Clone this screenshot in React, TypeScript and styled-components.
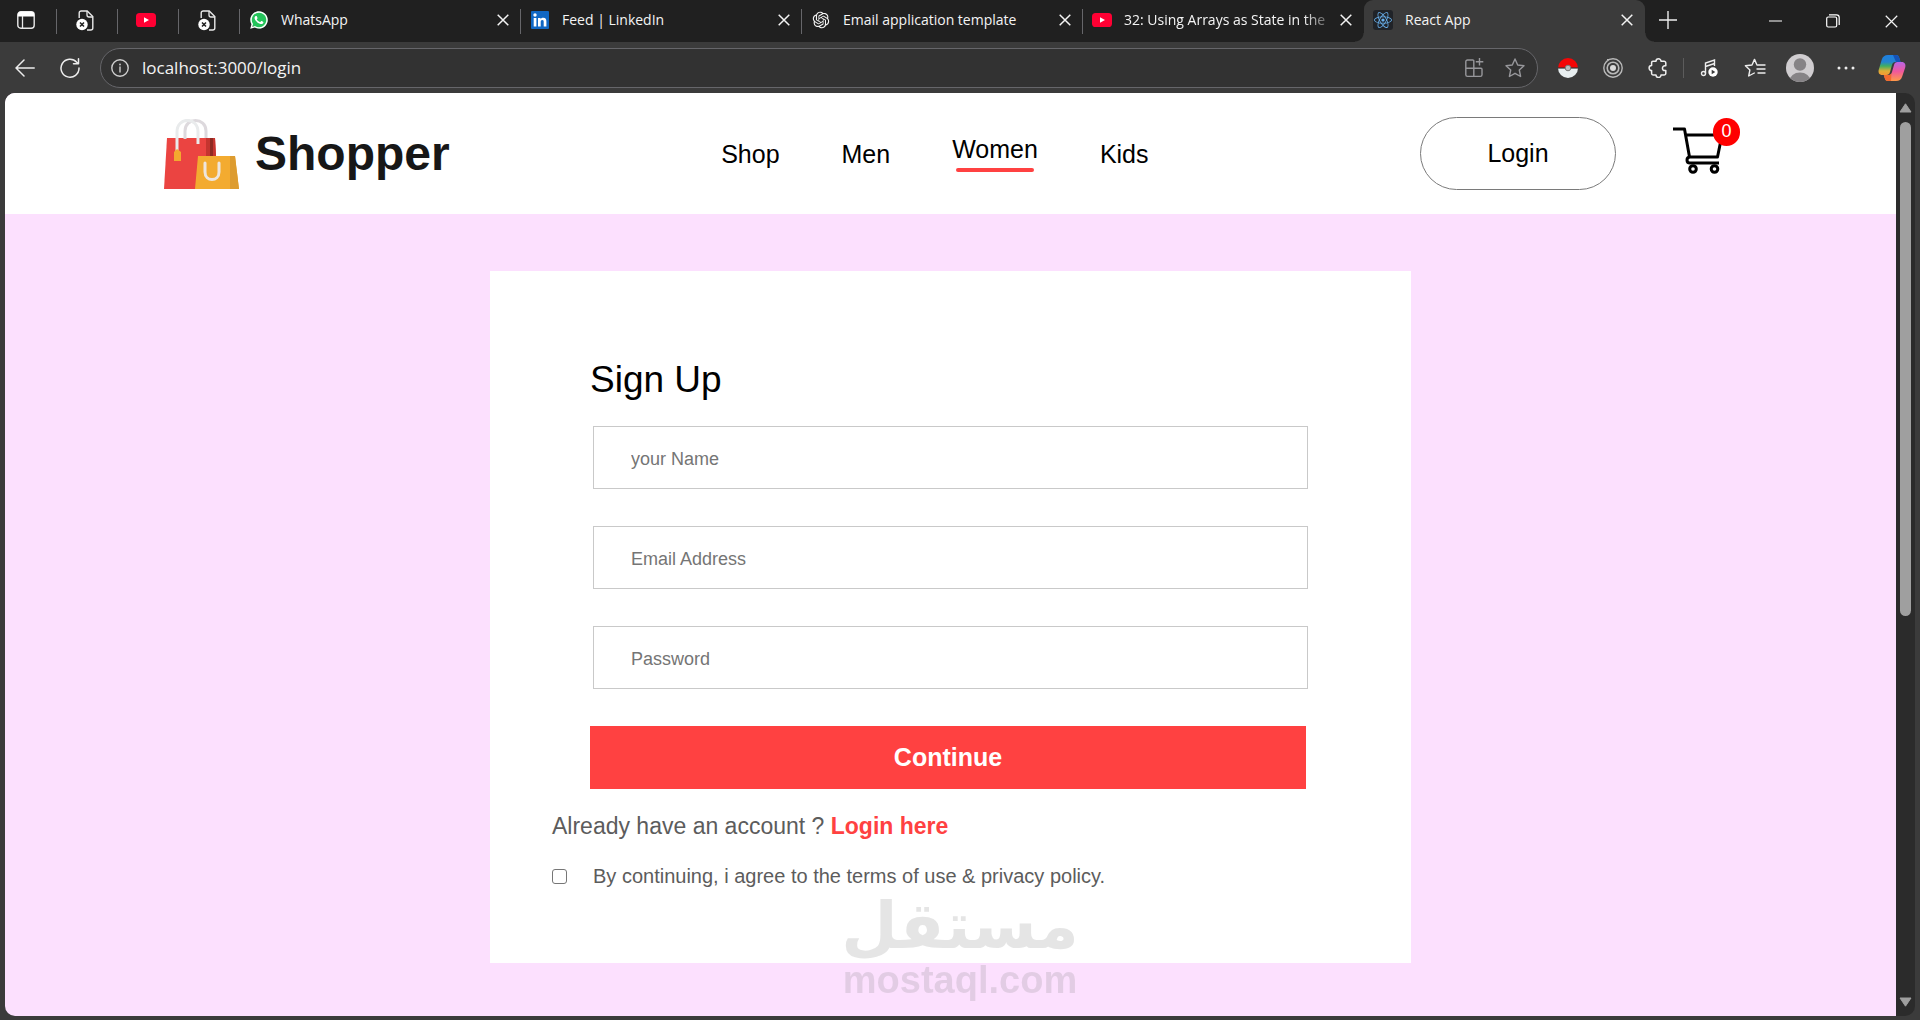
import React from "react";
import styled, { createGlobalStyle, css } from "styled-components";
import { FaReact, FaWhatsapp } from "react-icons/fa";
import { RiOpenaiFill } from "react-icons/ri";

const uiFont = `"Open Sans", "Noto Sans", sans-serif`;
const siteFont = `"Liberation Sans", Arial, sans-serif`;

const colors = {
  strip: "#202020",
  chrome: "#3b3b3b",
  field: "#323232",
  line: "#66666a",
  text: "#f4f4f4",
  accent: "#ff4141",
  pink: "#fce0fe",
  muted: "#5c5c5c",
};

const GlobalStyle = createGlobalStyle`
  * { box-sizing: border-box; }
  body { margin: 0; background: ${colors.chrome}; }
  button, input { font: inherit; }
`;

const Window = styled.div`
  position: relative;
  display: flex;
  flex-direction: column;
  height: 100vh;
  overflow: hidden;
  background: ${colors.chrome};
  font-family: ${uiFont};
  color: ${colors.text};
`;

/* ---------- browser chrome ---------- */

const IconButton = styled.button<{ $w?: number }>`
  display: flex;
  align-items: center;
  justify-content: center;
  flex: none;
  width: ${(p) => p.$w ?? 20}px;
  padding: 0;
  border: 0;
  background: none;
  color: inherit;
  svg { display: block; flex: none; }
`;

const TabStrip = styled.div`
  display: flex;
  height: 42px;
  background: ${colors.strip};
`;

const separator = css`
  background-image: linear-gradient(${colors.line}, ${colors.line});
  background-size: 1px 25px;
  background-position: right 9px;
  background-repeat: no-repeat;
`;

const PinnedTab = styled.button<{ $w?: number }>`
  display: flex;
  align-items: center;
  justify-content: center;
  flex: none;
  width: ${(p) => p.$w ?? 61}px;
  padding: 0 5px 2px 0;
  border: 0;
  background-color: transparent;
  ${separator}
`;

const Tab = styled.div<{ $active?: boolean; $line?: boolean }>`
  position: relative;
  display: flex;
  align-items: center;
  flex: 0 1 281px;
  min-width: 0;
  padding: 0 12px 2px 9px;
  ${(p) => p.$line && separator}
  ${(p) =>
    p.$active &&
    css`
      background: ${colors.chrome};
      border-radius: 9px 9px 0 0;
      &::before,
      &::after {
        content: "";
        position: absolute;
        bottom: 0;
        width: 9px;
        height: 9px;
      }
      &::before {
        right: 100%;
        background: radial-gradient(circle at 0 0, transparent 8px, ${colors.chrome} 9px);
      }
      &::after {
        left: 100%;
        background: radial-gradient(circle at 100% 0, transparent 8px, ${colors.chrome} 9px);
      }
    `}
`;

const TabTitle = styled.span<{ $fade?: boolean }>`
  flex: 1;
  min-width: 0;
  margin: 0 12px;
  overflow: hidden;
  white-space: nowrap;
  font-size: 14px;
  line-height: 20px;
  ${(p) => p.$fade && css`mask-image: linear-gradient(90deg, #000 88%, transparent 104%);`}
`;

const FavIcon = styled.span`
  display: flex;
  align-items: center;
  justify-content: center;
  flex: none;
  width: 20px;
  height: 20px;
`;

const GreenDisc = styled(FavIcon)`
  border-radius: 50%;
  background: radial-gradient(circle, #25c45b 8px, transparent 9px);
  color: #fff;
`;

const ReactTile = styled(FavIcon)`
  border-radius: 3px;
  background: #202328;
  color: #69b1ee;
`;

const WindowControls = styled.div`
  display: flex;
  margin-left: auto;
`;

const Toolbar = styled.div`
  display: flex;
  align-items: center;
  height: 51px;
  padding: 0 14px 0 15px;
`;

const NavButtons = styled.div`
  display: flex;
  gap: 25px;
  margin-right: 20px;
`;

const AddressBar = styled.div`
  display: flex;
  align-items: center;
  flex: 1;
  height: 40px;
  padding: 0 12px 0 10px;
  border: 1px solid ${colors.line};
  border-radius: 20px;
  background: ${colors.field};
`;

const AddressInput = styled.input`
  flex: 1;
  min-width: 0;
  margin: 0 13px;
  padding: 0;
  border: 0;
  outline: 0;
  background: none;
  color: ${colors.text};
  font-size: 17px;
  line-height: 24px;
`;

const AddressActions = styled.div`
  display: flex;
  gap: 21px;
  color: #97979b;
`;

const Extensions = styled.div`
  display: flex;
  align-items: center;
  gap: 25px;
  margin-left: 20px;
`;

const Rule = styled.span`
  width: 1px;
  height: 20px;
  margin: 0 -9px 0 -10px;
  background: #5c5c5c;
`;

const Profile = styled.div`
  display: flex;
  align-items: center;
  gap: 18px;
  margin-left: -4px;
`;

/* ---------- page frame ---------- */

const Frame = styled.div`
  display: flex;
  flex: 1;
  min-height: 0;
  margin: 0 5px 4px;
  border-radius: 10px;
  overflow: hidden;
`;

const Page = styled.div`
  flex: 1;
  min-width: 0;
  overflow: hidden;
  background: ${colors.pink};
  font-family: ${siteFont};
  color: #000;
`;

const ScrollBar = styled.div`
  display: flex;
  flex-direction: column;
  align-items: center;
  flex: none;
  width: 19px;
  padding: 10px 0 9px;
  background: #2b2b2b;
`;

const ScrollTrack = styled.div`
  flex: 1;
  width: 11px;
  margin: 9px 0;
`;

const ScrollThumb = styled.div`
  height: 57%;
  border-radius: 6px;
  background: #9f9f9f;
`;

/* ---------- shop page ---------- */

const Header = styled.header`
  display: flex;
  align-items: center;
  justify-content: space-between;
  height: 121px;
  padding: 0 156px 0 159px;
  background: #fff;
`;

const Brand = styled.a`
  display: flex;
  align-items: center;
  gap: 16px;
  color: #171717;
  text-decoration: none;
  font-size: 48px;
  font-weight: 700;
  line-height: 56px;
`;

const Menu = styled.nav`
  display: flex;
  align-items: center;
  gap: 62px;
`;

const MenuLink = styled.a<{ $current?: boolean }>`
  display: flex;
  flex-direction: column;
  align-items: center;
  gap: 5px;
  color: #000;
  text-decoration: none;
  font-size: 25px;
  line-height: 28px;
  ${(p) =>
    p.$current &&
    css`
      &::after {
        content: "";
        width: 90%;
        height: 4px;
        border-radius: 10px;
        background: ${colors.accent};
      }
    `}
`;

const Actions = styled.div`
  display: flex;
  align-items: center;
  gap: 57px;
`;

const LoginButton = styled.button`
  width: 196px;
  height: 73px;
  border: 1px solid #7a7a7a;
  border-radius: 37px;
  background: #fff;
  color: #000;
  font-size: 25px;
`;

const Cart = styled.a`
  position: relative;
  display: block;
  width: 67px;
  height: 54px;
  color: #000;
  svg { display: block; }
`;

const CartCount = styled.span`
  position: absolute;
  top: -9px;
  right: 0;
  width: 27px;
  height: 28px;
  border-radius: 14px;
  background: #ff0000;
  color: #fff;
  font-size: 18px;
  line-height: 27px;
  text-align: center;
`;

const Main = styled.main`
  padding: 57px 20px;
`;

const Card = styled.form`
  max-width: 921px;
  margin: 0 auto;
  padding: 88px 62px 75px;
  background: #fff;
`;

const Title = styled.h1`
  margin: 0 43px 25px 38px;
  font-size: 37px;
  font-weight: 400;
  line-height: 42px;
`;

const Fields = styled.div`
  display: flex;
  flex-direction: column;
  gap: 37px;
  margin: 0 41px 37px;
`;

const Field = styled.input`
  width: 100%;
  height: 63px;
  padding: 3px 37px 0;
  border: 1px solid #c9c9c9;
  border-radius: 0;
  outline: 0;
  background: #fff;
  color: ${colors.muted};
  font-size: 18px;
  &::placeholder { color: #757575; opacity: 1; }
`;

const SubmitRow = styled.div`
  display: flex;
  margin: 0 43px 24px 38px;
`;

const Submit = styled.button`
  flex: 1;
  height: 63px;
  border: 0;
  background: ${colors.accent};
  color: #fff;
  font-size: 25px;
  font-weight: 700;
`;

const Prompt = styled.p`
  margin: 0 0 25px;
  color: ${colors.muted};
  font-size: 23px;
  line-height: 26px;
  a {
    color: ${colors.accent};
    font-weight: 700;
    text-decoration: none;
  }
`;

const Agree = styled.div`
  display: flex;
  align-items: center;
  gap: 26px;
  color: ${colors.muted};
  font-size: 20px;
  line-height: 24px;
`;

const CheckBox = styled.input`
  appearance: none;
  flex: none;
  width: 15px;
  height: 15px;
  margin: 0;
  border: 1px solid #767676;
  border-radius: 3px;
  background: #fff;
`;

const Watermark = styled.div`
  position: absolute;
  left: 0;
  right: 0;
  bottom: 19px;
  display: flex;
  flex-direction: column;
  align-items: center;
  opacity: 0.2;
  color: #808080;
  font-weight: 700;
  pointer-events: none;
`;

const WatermarkArabic = styled.span`
  font-family: "DejaVu Sans", sans-serif;
  font-size: 65px;
  line-height: 66px;
`;

const WatermarkLatin = styled.span`
  font-family: ${siteFont};
  font-size: 38px;
  line-height: 42px;
`;

/* ---------- drawings ---------- */

const Cross = ({ size = 12, width = 1.5 }: { size?: number; width?: number }) => (
  <svg width={size} height={size} viewBox="0 0 12 12" fill="none" stroke="currentColor" strokeWidth={width}>
    <path d="M.7.7 11.3 11.3M11.3.7.7 11.3" />
  </svg>
);

const TabLayoutIcon = () => (
  <svg width="18" height="18" viewBox="0 0 18 18" fill="none">
    <rect x=".8" y=".8" width="16.4" height="16.4" rx="3" stroke="#e8e8e8" strokeWidth="1.4" />
    <path d="M.8 5.5V3.8a3 3 0 0 1 3-3h10.4a3 3 0 0 1 3 3v1.7z" fill="#fff" />
    <path d="M5.5 5v12" stroke="#e8e8e8" strokeWidth="1.3" />
  </svg>
);

const DeadFileIcon = () => (
  <svg width="18" height="21" viewBox="0 0 18 21" fill="none">
    <path d="M3.2 8V3a2 2 0 0 1 2-2h6l5.6 5.6V18a2 2 0 0 1-2 2H11" stroke="#e8e8e8" strokeWidth="1.4" />
    <path d="M11 1v4a2 2 0 0 0 2 2h4" stroke="#e8e8e8" strokeWidth="1.3" />
    <circle cx="6" cy="14.5" r="5.7" fill="#fff" />
    <path d="m4 12.5 4 4m0-4-4 4" stroke="#202020" strokeWidth="1.5" />
  </svg>
);

const YouTubeIcon = () => (
  <svg width="20" height="20" viewBox="0 0 20 20">
    <rect y="3" width="20" height="14" rx="3.6" fill="#ff0033" />
    <path d="M8 7.2v5.6l5-2.8z" fill="#fff" />
  </svg>
);

const LinkedInIcon = () => (
  <svg width="18" height="18" viewBox="0 0 18 18">
    <rect width="18" height="18" rx="1" fill="#1067c4" />
    <circle cx="4" cy="4" r="1.7" fill="#fff" />
    <path d="M2.7 7h2.7v8.4H2.7zM7 7h2.6v1.2C10.2 7.2 11.2 6.8 12.3 6.8c2.4 0 3.1 1.5 3.1 3.8v4.8h-2.7v-4.3c0-1.1-.2-2-1.4-2-1.2 0-1.6.9-1.6 2v4.3H7z" fill="#fff" />
  </svg>
);

const BackIcon = () => (
  <svg width="20" height="18" viewBox="0 0 20 18" fill="none" stroke="#ededed" strokeWidth="1.5" strokeLinecap="round" strokeLinejoin="round">
    <path d="M19.2 9H1M9 1 1 9l8 8" />
  </svg>
);

const ReloadIcon = () => (
  <svg width="20" height="20" viewBox="0 0 20 20" fill="none" stroke="#ededed" strokeWidth="1.5" strokeLinecap="round" strokeLinejoin="round">
    <path d="M19 10A9 9 0 1 1 16.7 4.2L18.3 5.6M18.5.8v5h-5" />
  </svg>
);

const InfoIcon = () => (
  <svg width="18" height="18" viewBox="0 0 18 18" fill="none" stroke="#cfcfcf" strokeWidth="1.4">
    <circle cx="9" cy="9" r="8.2" />
    <path d="M9 8v5" strokeLinecap="round" />
    <circle cx="9" cy="5.5" r=".9" fill="#cfcfcf" stroke="none" />
  </svg>
);

const AddAppIcon = () => (
  <svg width="20" height="20" viewBox="0 0 20 20" fill="none" stroke="currentColor" strokeWidth="1.4">
    <path d="M9.8 10.2V3a1 1 0 0 0-1-1H3.500A1.700 1.700 0 0 0 1.800 3.700v13A1.700 1.700 0 0 0 3.500 18.400h12.800a1.700 1.700 0 0 0 1.700-1.700v-5.500a1 1 0 0 0-1-1H1.800M9.800 18.400v-8M15.500 0v7.500M11.800 3.800h7.500" />
  </svg>
);

const starPath = "M10 1 12.700 7l6.300.7-4.700 4.300 1.300 6.500L10 15.300l-5.600 3.200 1.300-6.500L1 7.700 7.300 7z";

const StarIcon = () => (
  <svg width="20" height="20" viewBox="0 0 20 20" fill="none" stroke="currentColor" strokeWidth="1.4" strokeLinejoin="round">
    <path d={starPath} />
  </svg>
);

const PokeBallIcon = () => (
  <svg width="20" height="20" viewBox="0 0 20 20">
    <path d="M0 10a10 10 0 0 1 20 0z" fill="#f40606" />
    <path d="M0 10a10 10 0 0 0 20 0z" fill="#e8eef0" />
    <path d="M0 10h20" stroke="#333" strokeWidth="1.2" />
    <circle cx="10" cy="10" r="2.8" fill="#bdbdbd" stroke="#777" />
  </svg>
);

const TargetIcon = () => (
  <svg width="20" height="20" viewBox="0 0 20 20" fill="none" stroke="#b9b9b9">
    <circle cx="10" cy="10" r="9.2" strokeWidth="1.4" />
    <circle cx="10" cy="10" r="5.8" strokeWidth="1.6" />
    <circle cx="10" cy="10" r="3" fill="#d9d9d9" stroke="none" />
    <path d="M4 1.5h3" />
  </svg>
);

const PuzzleIcon = () => (
  <svg width="20" height="20" viewBox="0 0 20 20" fill="none" stroke="#ededed" strokeWidth="1.5" strokeLinejoin="round">
    <path d="M5 3.3h3a2.500 2.500 0 0 1 5 0h3a1.800 1.800 0 0 1 1.800 1.800v2.700h-1a2.300 2.300 0 0 0 0 4.700h1v2.700a1.800 1.800 0 0 1-1.800 1.800h-3a2.500 2.500 0 0 1-5 0H5a1.400 1.400 0 0 1-1.400-1.400v-3a2.500 2.500 0 0 1 0-5V4.700A1.400 1.400 0 0 1 5 3.300z" />
  </svg>
);

const MusicIcon = () => (
  <svg width="20" height="20" viewBox="0 0 20 20" fill="none" stroke="#ededed" strokeWidth="1.4">
    <circle cx="3.500" cy="15.500" r="2" />
    <path d="M5.500 15.500V5l9-3v6M5.500 8.500l9-3" />
    <circle cx="13" cy="14" r="4.700" fill="#fff" stroke="none" />
    <path d="M11.700 11.800v4.400l3.600-2.200z" fill="#3b3b3b" stroke="none" />
  </svg>
);

const FavoritesIcon = () => (
  <svg width="22" height="20" viewBox="0 0 22 20" fill="none" stroke="#ededed" strokeWidth="1.4" strokeLinejoin="round" strokeLinecap="round">
    <path d="M13 7 10.500 1.400 8 7 1.400 7.700l4.500 4.200L4.700 18l5.600-3M14 7h7M13 11h8M14 15h7" />
  </svg>
);

const AvatarIcon = () => (
  <svg width="28" height="28" viewBox="0 0 28 28">
    <clipPath id="avatar"><circle cx="14" cy="14" r="14" /></clipPath>
    <g clipPath="url(#avatar)">
      <rect width="28" height="28" fill="#d0cdd0" />
      <circle cx="14" cy="10.5" r="6.2" fill="#868386" />
      <ellipse cx="14" cy="27" rx="10.5" ry="8.5" fill="#868386" />
    </g>
  </svg>
);

const DotsIcon = () => (
  <svg width="18" height="4" viewBox="0 0 18 4" fill="#ededed">
    <circle cx="2" cy="2" r="1.5" /><circle cx="9" cy="2" r="1.5" /><circle cx="16" cy="2" r="1.5" />
  </svg>
);

const CopilotIcon = () => (
  <svg width="28" height="28" viewBox="0 0 28 28">
    <defs>
      <linearGradient id="cpLeft" x1="0" y1="0" x2="0" y2="1">
        <stop offset="0" stopColor="#1e7fe0" /><stop offset=".35" stopColor="#2484cf" />
        <stop offset=".55" stopColor="#3fae62" /><stop offset=".8" stopColor="#e0ae36" />
        <stop offset="1" stopColor="#f39a35" />
      </linearGradient>
      <linearGradient id="cpRight" x1="0" y1="0" x2="0" y2="1">
        <stop offset="0" stopColor="#b765e6" /><stop offset=".5" stopColor="#f0589c" />
        <stop offset="1" stopColor="#ff9a48" />
      </linearGradient>
    </defs>
    <path d="M10 1h8c2 0 2.700 1 3.300 3l1.200 4h-5c-2 0-3 1-3.500 3l-2 7c-.7 2.200-1.600 3-3.500 3H4.500C1 21 0 18.500.8 15.500l3-10C4.700 2.500 6.800 1 10 1z" fill="url(#cpLeft)" />
    <path d="M15 1h3c2 0 2.700 1 3.300 3l1.200 4h-4.500z" fill="#1553b8" />
    <path d="M18 27h-8c-2 0-2.700-1-3.300-3L5.800 21h4.700c2 0 3-1 3.500-3l2-7c.7-2.200 1.600-3 3.500-3h4c3.500 0 4.500 2.500 3.700 5.500l-3 9c-.9 3-3 4.500-6.200 4.500z" fill="url(#cpRight)" />
    <path d="M13 27h-3c-2 0-2.700-1-3.300-3L5.800 21h4.700c1.500 0 2.500-.6 3-2z" fill="#f26a2f" />
  </svg>
);

const ArrowUp = () => (
  <svg width="13" height="10" viewBox="0 0 13 10"><path d="M6.500.8 12 9H1z" fill="#9f9f9f" stroke="#9f9f9f" strokeLinejoin="round" /></svg>
);

const ArrowDown = () => (
  <svg width="13" height="10" viewBox="0 0 13 10"><path d="M6.500 9.200 12 1H1z" fill="#9f9f9f" stroke="#9f9f9f" strokeLinejoin="round" /></svg>
);

const BagsLogo = () => (
  <svg width="75" height="70" viewBox="0 0 75 70" fill="none">
    <path d="M3 19h48l3 51H0z" fill="#eb4441" />
    <path d="M42 19h9l1 18H42z" fill="#c5352f" />
    <path d="M46 19h3v18h-3z" fill="#8f2a22" />
    <path d="M21 20V12c0-14 21-14 21 0v7" stroke="#ddd9dd" strokeWidth="3" />
    <path d="M13 32V13c0-15.500 21-15.500 21 0v12" stroke="#e9ebec" strokeWidth="3" />
    <path d="m10 33 3-3 4 3v9h-7z" fill="#f3a92f" />
    <path d="M34 37h37l4 33H31z" fill="#f3ab30" />
    <path d="M66 37h5l4 33h-9z" fill="#dd9c30" />
    <path d="M41 44v9c0 10 14 10 14 0v-9" stroke="#eee6de" strokeWidth="3" strokeLinecap="round" />
  </svg>
);

const CartIcon = () => (
  <svg width="50" height="48" viewBox="0 0 50 48" fill="none" stroke="currentColor" strokeWidth="3">
    <path d="M0 2h11.500l5 28h28L49 8H13M17 30c-4 0-4 6 0 6h29" strokeLinejoin="round" />
    <circle cx="20" cy="42" r="3.300" /><circle cx="41.500" cy="42" r="3.300" />
  </svg>
);

/* ---------- content ---------- */

const tabs = [
  { title: "WhatsApp", icon: <GreenDisc><FaWhatsapp size={20} /></GreenDisc>, line: true },
  { title: "Feed | LinkedIn", icon: <FavIcon><LinkedInIcon /></FavIcon>, line: true },
  { title: "Email application template", icon: <FavIcon><RiOpenaiFill size={20} /></FavIcon>, line: true },
  { title: "32: Using Arrays as State in the", icon: <FavIcon><YouTubeIcon /></FavIcon>, fade: true },
  { title: "React App", icon: <ReactTile><FaReact size={18} /></ReactTile>, active: true },
];

const menu = ["Shop", "Men", "Women", "Kids"];

const fields = [
  { label: "your Name", type: "text" },
  { label: "Email Address", type: "email" },
  { label: "Password", type: "password" },
];

export default function App() {
  return (
    <Window>
      <GlobalStyle />
      <TabStrip>
        <PinnedTab $w={57} aria-label="Tab actions"><TabLayoutIcon /></PinnedTab>
        <PinnedTab aria-label="Pinned page"><DeadFileIcon /></PinnedTab>
        <PinnedTab aria-label="YouTube"><YouTubeIcon /></PinnedTab>
        <PinnedTab aria-label="Pinned page"><DeadFileIcon /></PinnedTab>
        {tabs.map((t) => (
          <Tab key={t.title} $active={t.active} $line={t.line}>
            {t.icon}
            <TabTitle $fade={t.fade}>{t.title}</TabTitle>
            <IconButton $w={12} aria-label={`Close ${t.title}`}><Cross /></IconButton>
          </Tab>
        ))}
        <IconButton $w={46} aria-label="New tab">
          <svg width="18" height="22" viewBox="0 0 18 22" fill="none" stroke="#ededed" strokeWidth="1.4"><path d="M9 1v18M0 10h18" /></svg>
        </IconButton>
        <WindowControls>
          <IconButton $w={58} aria-label="Minimize">
            <svg width="13" height="3" viewBox="0 0 13 3"><path d="M0 1h13" stroke="#fff" /></svg>
          </IconButton>
          <IconButton $w={58} aria-label="Restore">
            <svg width="14" height="14" viewBox="0 0 14 14" fill="none" stroke="#fff" strokeWidth="1.2">
              <rect x=".7" y="3" width="10" height="10" rx="1.5" />
              <path d="M3 .8h7.500a2.700 2.700 0 0 1 2.700 2.700V11" />
            </svg>
          </IconButton>
          <IconButton $w={58} aria-label="Close"><Cross size={13} width={1.1} /></IconButton>
        </WindowControls>
      </TabStrip>

      <Toolbar>
        <NavButtons>
          <IconButton aria-label="Back"><BackIcon /></IconButton>
          <IconButton aria-label="Reload"><ReloadIcon /></IconButton>
        </NavButtons>
        <AddressBar>
          <InfoIcon />
          <AddressInput aria-label="Address" defaultValue="localhost:3000/login" />
          <AddressActions>
            <IconButton aria-label="Install app"><AddAppIcon /></IconButton>
            <IconButton aria-label="Add to favorites"><StarIcon /></IconButton>
          </AddressActions>
        </AddressBar>
        <Extensions>
          <IconButton aria-label="Pokeball extension"><PokeBallIcon /></IconButton>
          <IconButton aria-label="Target extension"><TargetIcon /></IconButton>
          <IconButton aria-label="Extensions"><PuzzleIcon /></IconButton>
          <Rule />
          <IconButton aria-label="Media"><MusicIcon /></IconButton>
          <IconButton aria-label="Favorites"><FavoritesIcon /></IconButton>
          <Profile>
            <IconButton $w={28} aria-label="Profile"><AvatarIcon /></IconButton>
            <IconButton $w={28} aria-label="Settings and more"><DotsIcon /></IconButton>
            <IconButton $w={28} aria-label="Copilot"><CopilotIcon /></IconButton>
          </Profile>
        </Extensions>
      </Toolbar>

      <Frame>
        <Page>
          <Header>
            <Brand href="#"><BagsLogo />Shopper</Brand>
            <Menu>
              {menu.map((m) => (
                <MenuLink key={m} href="#" $current={m === "Women"}>{m}</MenuLink>
              ))}
            </Menu>
            <Actions>
              <LoginButton>Login</LoginButton>
              <Cart href="#" aria-label="Cart">
                <CartIcon />
                <CartCount>0</CartCount>
              </Cart>
            </Actions>
          </Header>
          <Main>
            <Card>
              <Title>Sign Up</Title>
              <Fields>
                {fields.map((f) => (
                  <Field key={f.label} type={f.type} placeholder={f.label} aria-label={f.label} />
                ))}
              </Fields>
              <SubmitRow><Submit type="button">Continue</Submit></SubmitRow>
              <Prompt>Already have an account ? <a href="#">Login here</a></Prompt>
              <Agree>
                <CheckBox type="checkbox" id="agree" />
                <label htmlFor="agree">By continuing, i agree to the terms of use &amp; privacy policy.</label>
              </Agree>
            </Card>
          </Main>
        </Page>
        <ScrollBar>
          <ArrowUp />
          <ScrollTrack><ScrollThumb /></ScrollTrack>
          <ArrowDown />
        </ScrollBar>
      </Frame>

      <Watermark>
        <WatermarkArabic lang="ar">مستقل</WatermarkArabic>
        <WatermarkLatin>mostaql.com</WatermarkLatin>
      </Watermark>
    </Window>
  );
}
